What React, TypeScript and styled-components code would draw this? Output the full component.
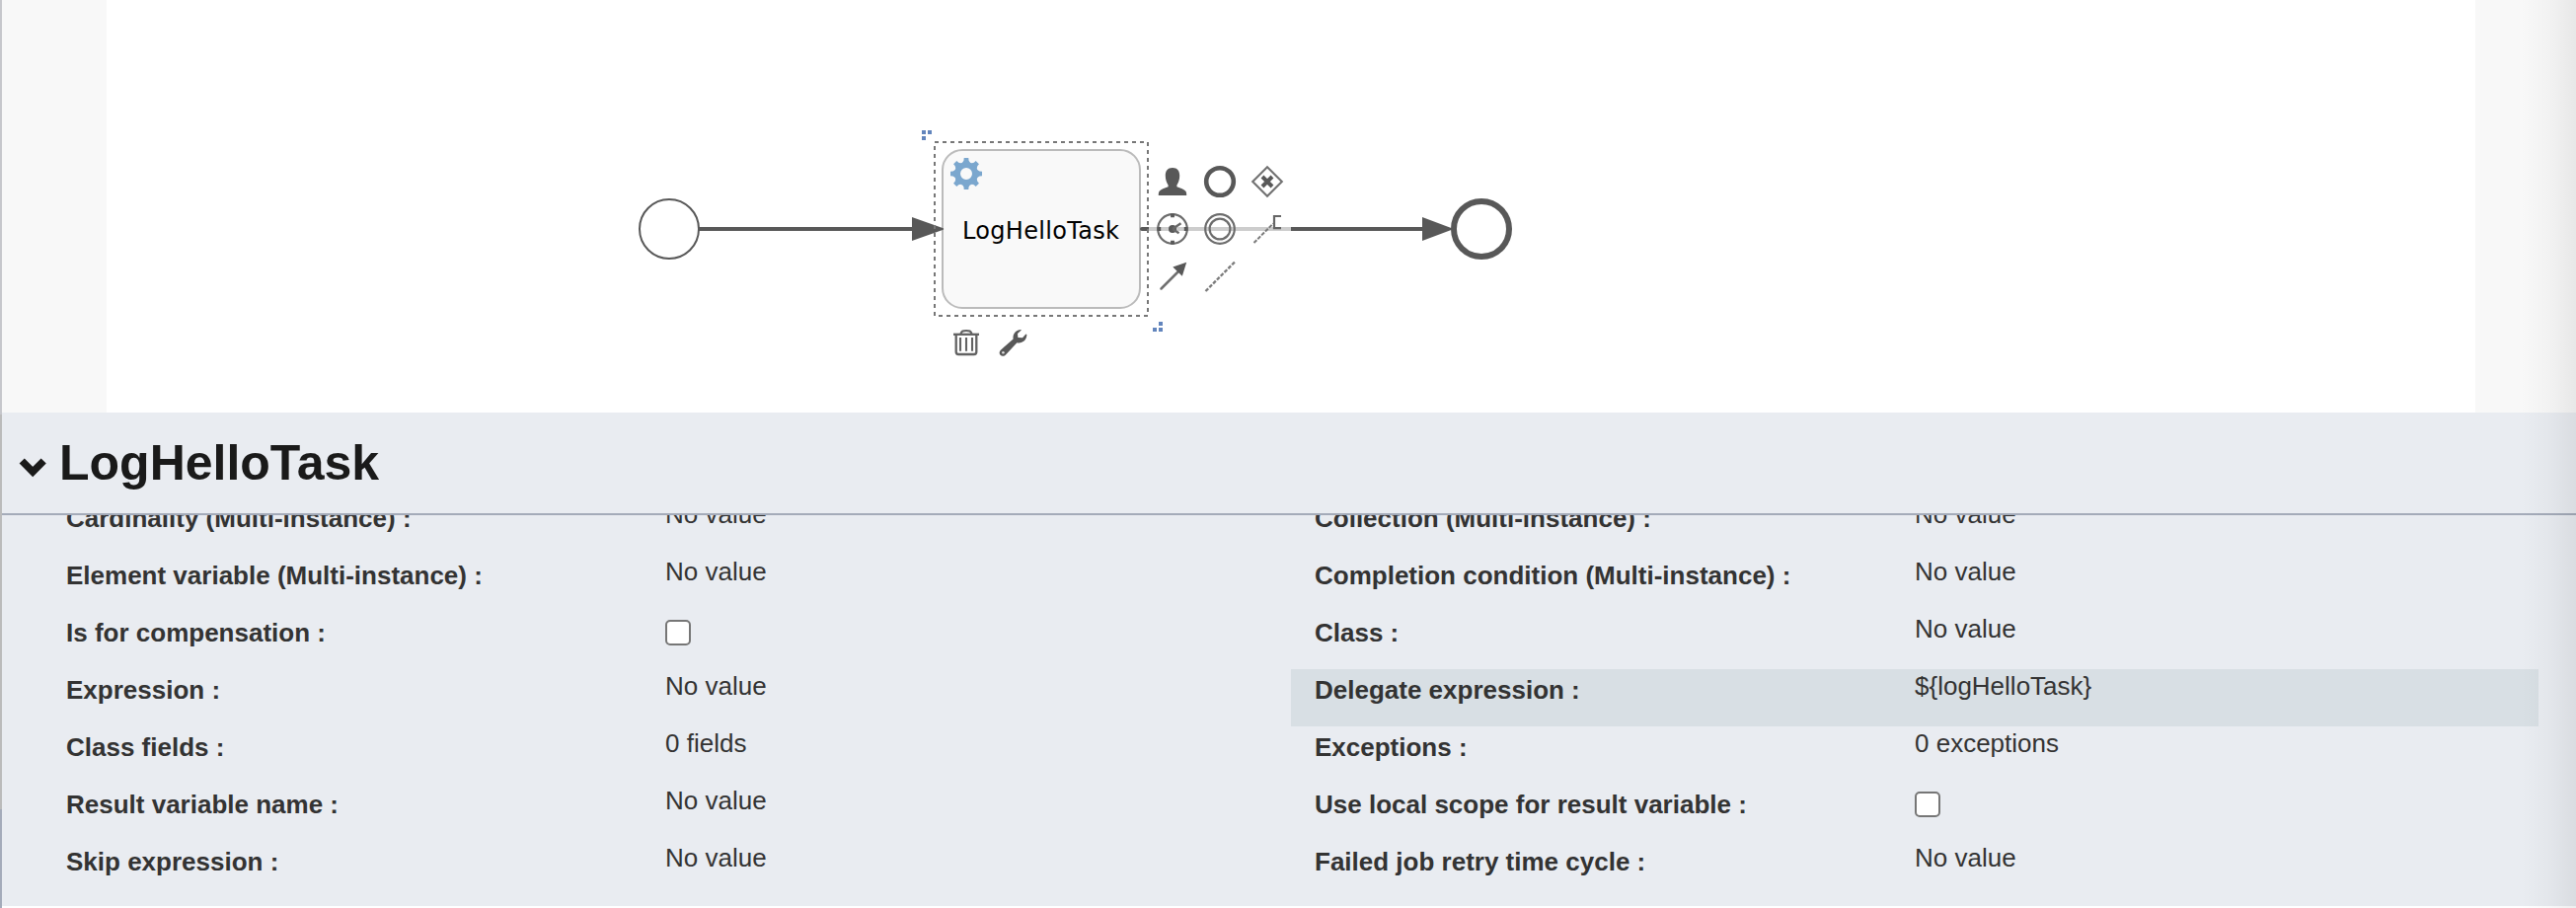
import React from "react";
import styled, { createGlobalStyle } from "styled-components";

const GlobalStyle = createGlobalStyle`
  * { box-sizing: border-box; }
  body { margin: 0; background: #fff; font-family: "Liberation Sans", Arial, sans-serif; }
`;

const Page = styled.div`
  position: relative;
  display: flex;
  width: 2610px;
  height: 920px;
  overflow: hidden;
  background: #fff;
  &::after {
    content: "";
    position: absolute;
    top: 0;
    right: 0;
    bottom: 0;
    width: 56px;
    pointer-events: none;
    background: linear-gradient(to right, rgba(0, 0, 0, 0), rgba(0, 0, 0, 0.022) 50%, rgba(0, 0, 0, 0.065));
  }
`;

const Splitter = styled.div`
  flex: 0 0 2px;
  background: linear-gradient(#c6c7cc 420px, #bbbbbb 420px, #bbbbbb 820px, #a4abba 820px);
`;

const Main = styled.div`
  flex: 1;
  min-width: 0;
  display: flex;
  flex-direction: column;
`;

const CanvasArea = styled.div`
  height: 418px;
  padding: 0 102px 0 106px;
  background: #f8f8f8;
`;

const Canvas = styled.svg`
  display: block;
  width: 2400px;
  height: 418px;
  background: #fff;
`;

const TaskLabel = styled.text`
  font-family: "DejaVu Sans", sans-serif;
  font-size: 24px;
  fill: #000;
`;

const Panel = styled.section`
  height: 500px;
  display: flex;
  flex-direction: column;
  background: #e9ecf1;
`;

const PanelHeader = styled.header`
  flex: 0 0 104px;
  display: flex;
  align-items: center;
  gap: 13px;
  padding-left: 17px;
  border-bottom: 2px solid #a4abb9;
`;

const Chevron = styled.svg`
  width: 28px;
  height: 22px;
  margin-top: 9px;
`;

const Title = styled.h1`
  margin: 0;
  font-size: 50px;
  line-height: 60px;
  font-weight: 700;
  color: #1a1a1a;
`;

const PropertiesViewport = styled.div`
  flex: 1;
  min-height: 0;
  overflow: hidden;
`;

/* The list is scrolled slightly under the header border. */
const Properties = styled.div`
  margin-top: -18px;
  display: grid;
  grid-template-columns: 1265px 1264px;
  grid-auto-rows: 58px;
  padding-left: 41px;
`;

const Property = styled.div<{ $selected?: boolean }>`
  display: grid;
  grid-template-columns: 608px 1fr;
  padding-left: 24px;
  background: ${(p) => (p.$selected ? "#d8dfe4" : "transparent")};
  &:nth-child(odd) {
    grid-template-columns: 607px 1fr;
  }
`;

const Label = styled.span`
  padding-top: 6px;
  font-size: 26px;
  line-height: 30px;
  font-weight: 700;
  color: #333;
  white-space: nowrap;
`;

const Value = styled.span`
  padding-top: 2px;
  font-size: 26px;
  line-height: 30px;
  color: #333;
  white-space: nowrap;
`;

const Checkbox = styled.input`
  appearance: none;
  width: 26px;
  height: 26px;
  margin: 8px 0 0;
  border: 2px solid #767676;
  border-radius: 5px;
  background: #fff;
`;

type Item = { label: string; value?: string; selected?: boolean };

const items: Item[] = [
  { label: "Cardinality (Multi-instance) :", value: "No value" },
  { label: "Collection (Multi-instance) :", value: "No value" },
  { label: "Element variable (Multi-instance) :", value: "No value" },
  { label: "Completion condition (Multi-instance) :", value: "No value" },
  { label: "Is for compensation :" },
  { label: "Class :", value: "No value" },
  { label: "Expression :", value: "No value" },
  { label: "Delegate expression :", value: "${logHelloTask}", selected: true },
  { label: "Class fields :", value: "0 fields" },
  { label: "Exceptions :", value: "0 exceptions" },
  { label: "Result variable name :", value: "No value" },
  { label: "Use local scope for result variable :" },
  { label: "Skip expression :", value: "No value" },
  { label: "Failed job retry time cycle :", value: "No value" },
];

const ink = "#585858";

const Gear = () => (
  <g transform="translate(979 176)" fill="#7ba7ce">
    <circle r="9" fill="none" stroke="#7ba7ce" strokeWidth="6" />
    {[0, 45, 90, 135, 180, 225, 270, 315].map((a) => (
      <path key={a} d="M-4,-11 L-2.5,-13.5 L-2.3,-16 H2.3 L2.5,-13.5 L4,-11 Z" transform={`rotate(${a})`} />
    ))}
  </g>
);

const UserIcon = () => (
  <path
    transform="translate(1188 184)"
    fill={ink}
    d="M0,-14 C5,-14 7.2,-11 7.2,-6 C7.2,-2 6,1 4.4,3.4 V5.2 C8,6.6 12,7.6 13.4,9.8 C14.2,11.2 14.2,12.6 14.2,14 H-14.2 C-14.2,12.6 -14.2,11.2 -13.4,9.8 C-12,7.6 -8,6.6 -4.4,5.2 V3.4 C-6,1 -7.2,-2 -7.2,-6 C-7.2,-11 -5,-14 0,-14 Z"
  />
);

const GatewayIcon = () => (
  <g transform="translate(1284 184)" fill="none" stroke="#727272">
    <path d="M0,-14.8 L14.8,0 L0,14.8 L-14.8,0 Z" strokeWidth="2.1" />
    <path d="M-5,-5 L5,5 M5,-5 L-5,5" stroke={ink} strokeWidth="4" />
  </g>
);

const TimerIcon = () => (
  <g transform="translate(1188 232)">
    <circle r="14.8" fill="none" stroke="#6c6c6c" strokeWidth="2.2" />
    <path d="M0,-15.5 V-11.8 M0,11.8 V15.5 M-15.5,0 H-11.8 M11.8,0 H15.5" stroke={ink} strokeWidth="3.8" />
    <circle r="4" fill={ink} />
    <path d="M0,0 L8.5,-5.8 M0,0 L6.5,4.2" stroke="#686868" strokeWidth="2.4" />
  </g>
);

const AnnotationIcon = () => (
  <g transform="translate(1284 232)" fill="none" stroke="#7a7a7a" strokeWidth="2">
    <path d="M-13.5,14 L6,-5.5" strokeDasharray="4 1.4" />
    <path d="M14,-13 H7 V-0.8 H14" stroke="#666" strokeWidth="2.2" />
  </g>
);

const ConnectIcon = () => (
  <g transform="translate(1188 280)">
    <path d="M-11.5,12.5 L6,-5" stroke="#707070" strokeWidth="2.5" strokeLinecap="round" />
    <path d="M14.2,-14.2 L0.3,-9.4 L9.8,-0.2 Z" fill={ink} />
  </g>
);

const AssociationIcon = () => (
  <path d="M1221.5,295 L1251,265.5" stroke="#7a7a7a" strokeWidth="2.3" strokeDasharray="3.8 1.6" />
);

const TrashIcon = () => (
  <g transform="translate(979 347)" fill="none" stroke="#626262">
    <path d="M-13,-8.2 H13" strokeWidth="2.3" />
    <path d="M-5.5,-8.8 C-4.5,-11.8 -3.5,-12 0,-12 C3.5,-12 4.5,-11.8 5.5,-8.8" strokeWidth="2.2" />
    <path d="M-10.3,-8 V9.5 Q-10.3,12 -7.8,12 H7.8 Q10.3,12 10.3,9.5 V-8" strokeWidth="2.3" />
    <path d="M-6,-5 V8.8 M0,-5 V8.8 M6,-5 V8.8" strokeWidth="2.1" />
  </g>
);

const WrenchIcon = () => (
  <g transform="translate(1027 347)">
    <path
      fill={ink}
      d="M7.5,-13 C2,-12.5 -1.2,-8.5 -0.4,-3.4 L-12.6,7.2 C-14.8,9.2 -14.8,11.4 -13.4,12.8 C-11.8,14.4 -9.4,14 -7.8,12.2 L3.4,0.2 C8.6,1.2 13.2,-2 13.4,-8 L12.4,-8.6 L9,-4.8 L4.4,-5 L4,-9 L7.8,-12.4 Z"
    />
    <circle cx="-10.6" cy="10.2" r="1.3" fill="#ddd" />
  </g>
);

const Diagram = () => (
  <Canvas viewBox="108 0 2400 418">
    <circle cx="678" cy="232" r="30" fill="#fff" stroke={ink} strokeWidth="2" />
    <path d="M708,232 H926" stroke={ink} strokeWidth="4" />
    <rect x="955" y="152" width="200" height="160" rx="20" fill="#f9f9f9" stroke="#bbb" strokeWidth="2" />
    <path d="M924,220 L955,231 Q957.5,232 955,233 L924,244 Z" fill={ink} />
    <path d="M1157,232 H1443" stroke={ink} strokeWidth="4" strokeLinecap="round" />
    <path d="M1441,220 L1473,232 L1441,244 Z" fill={ink} />
    <circle cx="1501" cy="232" r="28" fill="#fff" stroke={ink} strokeWidth="6" />
    <rect x="947" y="144" width="216" height="176" fill="none" stroke="#777" strokeWidth="2" strokeDasharray="4 4" />
    <Gear />
    <TaskLabel x="975" y="241.5" textLength="159" lengthAdjust="spacing">
      LogHelloTask
    </TaskLabel>
    <g fill="#6285bd">
      <path d="M934,132 h4 v4 h-4 Z M940,132 h4 v4 h-4 Z M934,138 h4 v4 h-4 Z" />
      <path d="M1174,326 h4 v4 h-4 Z M1168,332 h4 v4 h-4 Z M1174,332 h4 v4 h-4 Z" />
    </g>
    <rect x="1164" y="160" width="144" height="144" fill="#fff" opacity="0.7" />
    <UserIcon />
    <circle cx="1236" cy="184" r="13.8" fill="none" stroke={ink} strokeWidth="4.6" />
    <GatewayIcon />
    <TimerIcon />
    <circle cx="1236" cy="232" r="14.8" fill="none" stroke="#6c6c6c" strokeWidth="2.2" />
    <circle cx="1236" cy="232" r="10.4" fill="none" stroke="#6c6c6c" strokeWidth="2.2" />
    <AnnotationIcon />
    <ConnectIcon />
    <AssociationIcon />
    <TrashIcon />
    <WrenchIcon />
  </Canvas>
);

export default function App() {
  return (
    <Page>
      <GlobalStyle />
      <Splitter />
      <Main>
        <CanvasArea>
          <Diagram />
        </CanvasArea>
        <Panel>
          <PanelHeader>
            <Chevron viewBox="0 0 28 22">
              <path d="M3.2,4 L14.2,15 L25.2,4" fill="none" stroke="#1a1a1a" strokeWidth="7.4" />
            </Chevron>
            <Title>LogHelloTask</Title>
          </PanelHeader>
          <PropertiesViewport>
            <Properties>
              {items.map((item) => (
                <Property key={item.label} $selected={item.selected}>
                  <Label>{item.label}</Label>
                  {item.value ? <Value>{item.value}</Value> : <Checkbox type="checkbox" />}
                </Property>
              ))}
            </Properties>
          </PropertiesViewport>
        </Panel>
      </Main>
    </Page>
  );
}
